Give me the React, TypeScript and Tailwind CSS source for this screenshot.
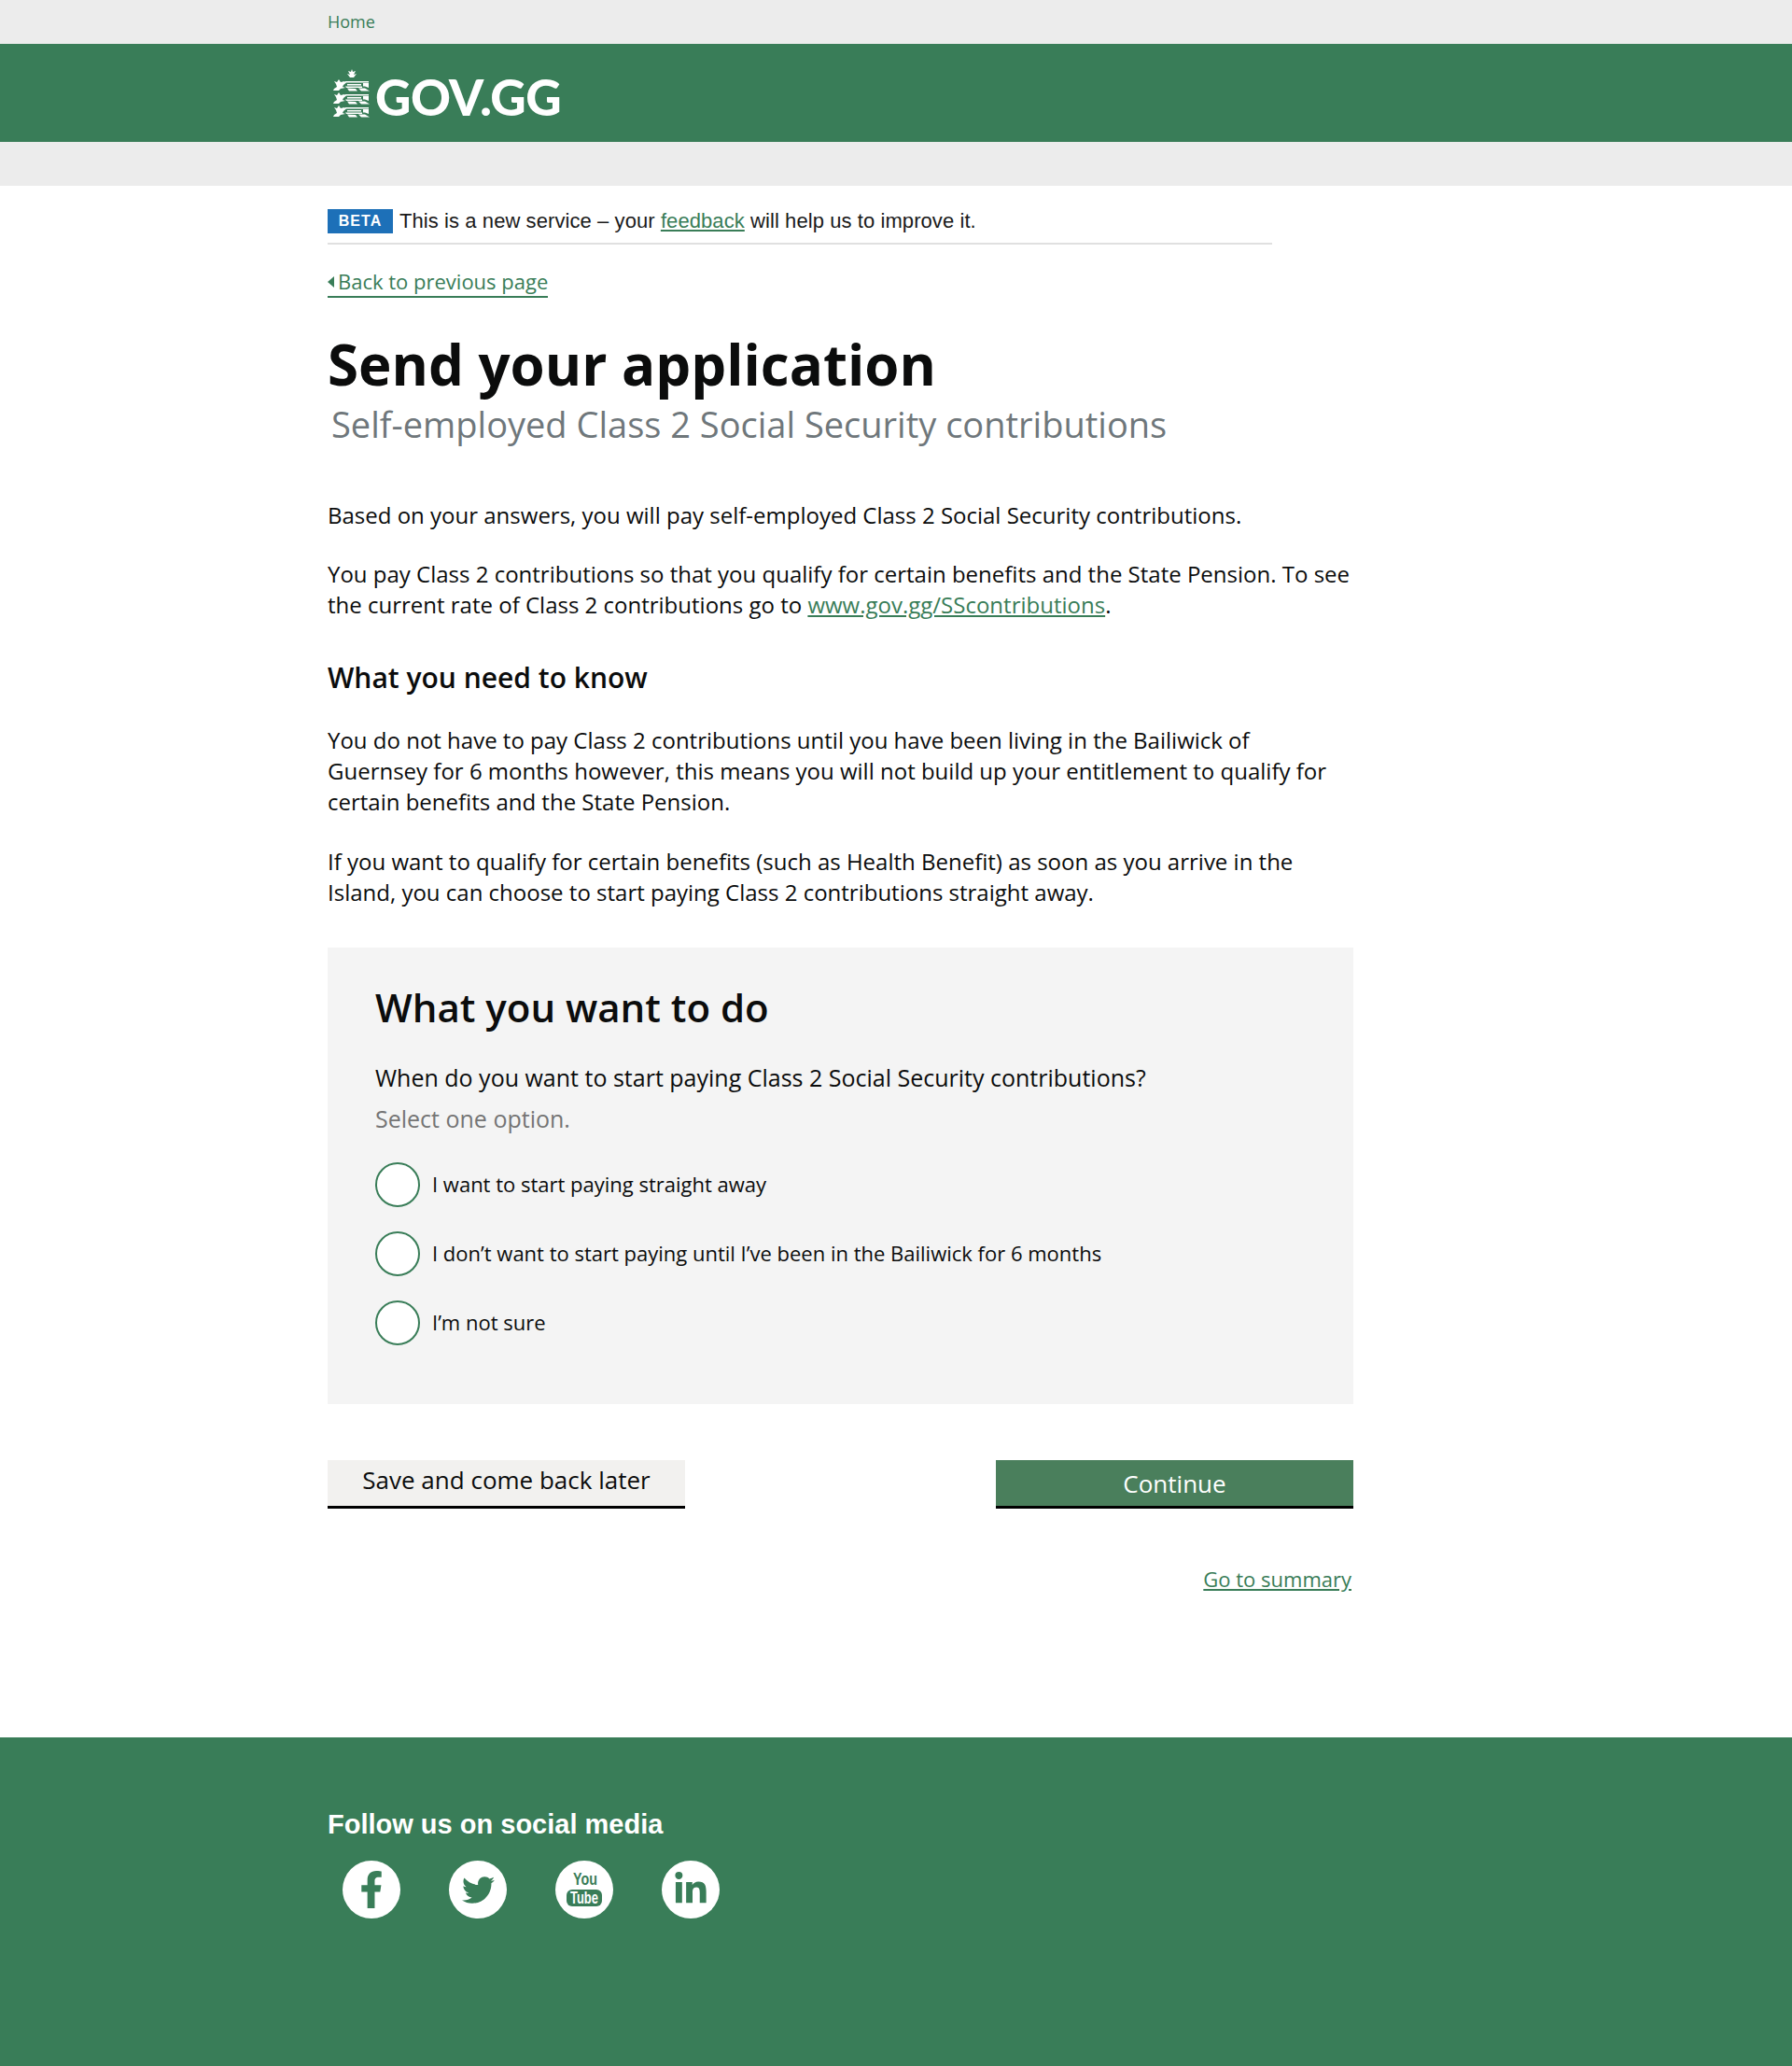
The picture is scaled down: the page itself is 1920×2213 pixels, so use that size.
import { FaFacebookF, FaTwitter, FaLinkedinIn } from 'react-icons/fa';

const options = [
    'I want to start paying straight away',
    'I don’t want to start paying until I’ve been in the Bailiwick for 6 months',
    'I’m not sure',
];

function Lion() {
    return (
        <g fill="#fff">
            <path d="M1 10 L4 8 L3 5 L1 2 L4 3 L6 0 L8 3 L12 2 L14 3.5 L11 6 L10 8 L13 9 L8 10 L6 12 L0 12 Z" />
            <path d="M13 2 H38 V3.5 H13 Z M15 5 H30 V6.5 H15 Z M32 4 H38 V9 L34 7.5 H32 Z M13 7.5 H31 V9 H14 Z M15 9.5 L24 10 L26 12.5 H17 Z M27 9.5 H34 L39 12.5 H30 Z" />
        </g>
    );
}

function Crest() {
    return (
        <svg width="40" height="52" viewBox="0 0 40 52" className="shrink-0">
            <path d="M20 0 L21 3 L24 2 L22 6 L25 5 L22 9 H18 L15 5 L18 6 L16 2 L19 3 Z" fill="#fff" />
            <g transform="translate(0 11)"><Lion /></g>
            <g transform="translate(0 25)"><Lion /></g>
            <g transform="translate(0 39)"><Lion /></g>
        </svg>
    );
}

function YouTubeMark() {
    return (
        <svg width="62" height="62" viewBox="0 0 62 62">
            <text x="19" y="26" textLength="26" lengthAdjust="spacingAndGlyphs" fontFamily="Liberation Sans" fontWeight="700" fontSize="19" fill="#397d58">You</text>
            <rect x="12" y="31" width="38" height="18" rx="6" fill="#397d58" />
            <text x="16" y="46" textLength="30" lengthAdjust="spacingAndGlyphs" fontFamily="Liberation Sans" fontWeight="700" fontSize="18" fill="#fff">Tube</text>
        </svg>
    );
}

function SocialIcon({ children }: { children: React.ReactNode }) {
    return (
        <a className="w-[62px] h-[62px] rounded-full bg-white flex items-center justify-center text-[#397d58]">
            {children}
        </a>
    );
}

export default function App() {
    return (
        <div className="min-h-[2213px] bg-white font-['Open_Sans',sans-serif] text-[24px] leading-[33px] text-[#0b0c0c]">
            <div className="h-[47px] bg-[#ececec]">
                <div className="mx-auto w-[1218px] text-[18px] leading-[47px] text-[#397d58]">Home</div>
            </div>
            <header className="h-[105px] bg-[#397d58]">
                <div className="mx-auto w-[1218px] pl-[6px] pt-[27px] flex items-start gap-[5px]">
                    <Crest />
                    <span className="font-['Lato',sans-serif] font-black text-[53px] leading-[52px] mt-[4px] tracking-[-0.5px] text-white">GOV.GG</span>
                </div>
            </header>
            <div className="h-[47px] bg-[#ececec]"></div>

            <main className="mx-auto w-[1218px]">
                <div className="w-[1012px] h-[63px] pt-[25px] border-b-2 border-[#e0e0e0] flex items-start gap-[7px] font-['Liberation_Sans',sans-serif] text-[22px] leading-[26px] tracking-[0.08px] text-[#1a1a1a]">
                    <span className="w-[70px] h-[26px] bg-[#1d70b8] text-white text-[16px] font-bold tracking-[1px] text-center">BETA</span>
                    <span>This is a new service – your <a className="text-[#397d58] underline">feedback</a> will help us to improve it.</span>
                </div>

                <a className="mt-[24px] inline-flex items-center gap-[4px] text-[22px] leading-[31px] text-[#397d58] border-b-2 border-[#397d58]">
                    <span className="w-0 h-0 border-y-[6px] border-y-transparent border-r-[7px] border-r-[#397d58]"></span>
                    Back to previous page
                </a>

                <h1 className="mt-[31px] text-[60px] leading-[80px] font-bold">Send your application</h1>
                <h2 className="ml-[4px] text-[38px] leading-[48px] text-[#6f777b]">Self-employed Class 2 Social Security contributions</h2>

                <div className="w-[1099px]">
                    <p className="mt-[57px]">Based on your answers, you will pay self-employed Class 2 Social Security contributions.</p>
                    <p className="mt-[30px]">You pay Class 2 contributions so that you qualify for certain benefits and the State Pension. To see the current rate of Class 2 contributions go to <a className="text-[#397d58] underline">www.gov.gg/SScontributions</a>.</p>
                    <h3 className="mt-[42px] text-[30px] leading-[40px] font-semibold">What you need to know</h3>
                    <p className="mt-[30px]">You do not have to pay Class 2 contributions until you have been living in the Bailiwick of Guernsey for 6 months however, this means you will not build up your entitlement to qualify for certain benefits and the State Pension.</p>
                    <p className="mt-[31px]">If you want to qualify for certain benefits (such as Health Benefit) as soon as you arrive in the Island, you can choose to start paying Class 2 contributions straight away.</p>

                    <section className="mt-[43px] h-[489px] bg-[#f4f4f4] pl-[51px] pt-[36px]">
                        <h2 className="text-[42px] leading-[56px] font-semibold">What you want to do</h2>
                        <p className="mt-[31px] text-[25px]">When do you want to start paying Class 2 Social Security contributions?</p>
                        <p className="mt-[11px] text-[25px] text-[#757575]">Select one option.</p>
                        <div className="mt-[30px] flex flex-col gap-[26px]">
                            {options.map((option) => (
                                <label key={option} className="flex items-center gap-[13px] text-[22px] leading-[46px]">
                                    <span className="w-[48px] h-[48px] rounded-full border-2 border-[#397d58] bg-white shrink-0"></span>
                                    <span className="pb-[2px]">{option}</span>
                                </label>
                            ))}
                        </div>
                    </section>

                    <div className="mt-[60px] flex justify-between">
                        <button className="w-[383px] h-[52px] bg-[#f2f1ef] border-b-[3px] border-black text-[26px] leading-[41px] pb-[6px]">Save and come back later</button>
                        <button className="w-[383px] h-[52px] bg-[#4a7f5c] border-b-[3px] border-black text-[26px] leading-[50px] text-white">Continue</button>
                    </div>

                    <div className="mt-[60px] text-right pr-[2px] text-[22px] leading-[30px]">
                        <a className="text-[#397d58] underline">Go to summary</a>
                    </div>
                </div>
            </main>

            <footer className="mt-[155px] h-[352px] bg-[#397d58] text-white">
                <div className="mx-auto w-[1218px] pt-[73px]">
                    <h2 className="font-['Liberation_Sans',sans-serif] font-bold text-[29px] leading-[40px]">Follow us on social media</h2>
                    <div className="mt-[19px] ml-[16px] flex gap-[52px]">
                        <SocialIcon><FaFacebookF size={40} /></SocialIcon>
                        <SocialIcon><FaTwitter size={35} /></SocialIcon>
                        <SocialIcon><YouTubeMark /></SocialIcon>
                        <SocialIcon><FaLinkedinIn size={38} /></SocialIcon>
                    </div>
                </div>
            </footer>
        </div>
    );
}
